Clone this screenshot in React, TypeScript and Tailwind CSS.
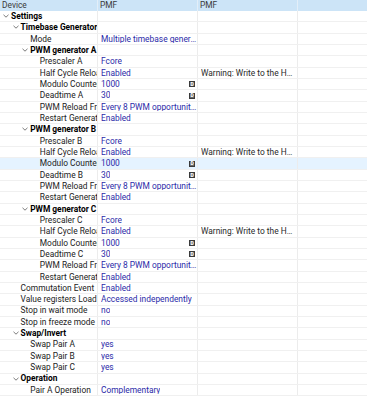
import React from "react";

type Row = {
  label: string;
  level: number;
  group?: boolean;
  value?: string;
  note?: string;
  badge?: boolean;
  selected?: boolean;
};

const pwmGroup = (x: string, selected = false): Row[] => [
  { label: `PWM generator ${x}`, level: 2, group: true },
  { label: `Prescaler ${x}`, level: 3, value: "Fcore" },
  {
    label: "Half Cycle Reload",
    level: 3,
    value: "Enabled",
    note: "Warning: Write to the Half Cycle register is not buffered",
  },
  { label: "Modulo Counter", level: 3, value: "1000", badge: true, selected },
  { label: `Deadtime ${x}`, level: 3, value: "30", badge: true },
  { label: "PWM Reload Frequency", level: 3, value: "Every 8 PWM opportunities" },
  { label: "Restart Generator", level: 3, value: "Enabled" },
];

const rows: Row[] = [
  { label: "Settings", level: 0, group: true },
  { label: "Timebase Generator(s)", level: 1, group: true },
  { label: "Mode", level: 2, value: "Multiple timebase generators" },
  ...pwmGroup("A"),
  ...pwmGroup("B", true),
  ...pwmGroup("C"),
  { label: "Commutation Event", level: 1, value: "Enabled" },
  { label: "Value registers Load Mode", level: 1, value: "Accessed independently" },
  { label: "Stop in wait mode", level: 1, value: "no" },
  { label: "Stop in freeze mode", level: 1, value: "no" },
  { label: "Swap/Invert", level: 1, group: true },
  { label: "Swap Pair A", level: 2, value: "yes" },
  { label: "Swap Pair B", level: 2, value: "yes" },
  { label: "Swap Pair C", level: 2, value: "yes" },
  { label: "Operation", level: 1, group: true },
  { label: "Pair A Operation", level: 2, value: "Complementary" },
];

function Chevron() {
  return (
    <svg width="6" height="4" viewBox="0 0 6 4" className="shrink-0">
      <polyline points="0.5,0.8 3,3.2 5.5,0.8" fill="none" stroke="#6b6b6b" strokeWidth="0.9" />
    </svg>
  );
}

export default function App() {
  return (
    <div
      className="w-[367px] h-[400px] overflow-hidden bg-white text-[8.4px] leading-none text-[#222]"
      style={{ fontFamily: 'Roboto, "Noto Sans", sans-serif' }}
    >
      {/* header */}
      <div className="flex h-[11px] bg-[#cce4f7] text-[#3a3a3a]">
        <div className="w-[98px] shrink-0 flex items-center pl-[2px] border-r border-[#e3eef8]">Device</div>
        <div className="w-[100px] shrink-0 flex items-center pl-[2px] border-r border-[#e3eef8]">PMF</div>
        <div className="w-[100px] shrink-0 flex items-center pl-[2px] border-r border-[#e3eef8]">PMF</div>
        <div className="flex-1" />
      </div>

      {rows.map((r, i) => (
        <div
          key={i}
          className={`flex h-[11.33px] border-b border-[#f0f0f0] ${r.selected ? "bg-[#e5f3ff]" : ""}`}
        >
          <div
            className="w-[98px] shrink-0 flex items-center overflow-hidden whitespace-nowrap border-r border-[#ececec]"
            style={{ paddingLeft: 2 + r.level * 9.6 }}
          >
            <span className="w-[9px] shrink-0 flex items-center pl-[1px]">{r.group && <Chevron />}</span>
            <span className={r.group ? "font-bold text-black" : ""}>{r.label}</span>
          </div>
          <div className="w-[100px] shrink-0 flex items-center pl-[3px] border-r border-[#ececec] relative">
            {r.value && (
              <span className="truncate text-[#2a2aa8] min-w-0">{r.value}</span>
            )}
            {r.badge && (
              <span className="absolute right-[2px] top-[2.5px] w-[6px] h-[6px] bg-[#6a6a6a] border border-[#3a3a3a] text-white text-[5px] font-bold flex items-center justify-center">
                D
              </span>
            )}
          </div>
          <div className="w-[100px] shrink-0 flex items-center pl-[3px] pr-[3px] border-r border-[#ececec]">
            {r.note && <span className="truncate min-w-0 text-[#2a2a2a]">{r.note}</span>}
          </div>
          <div className="flex-1" />
        </div>
      ))}
    </div>
  );
}
